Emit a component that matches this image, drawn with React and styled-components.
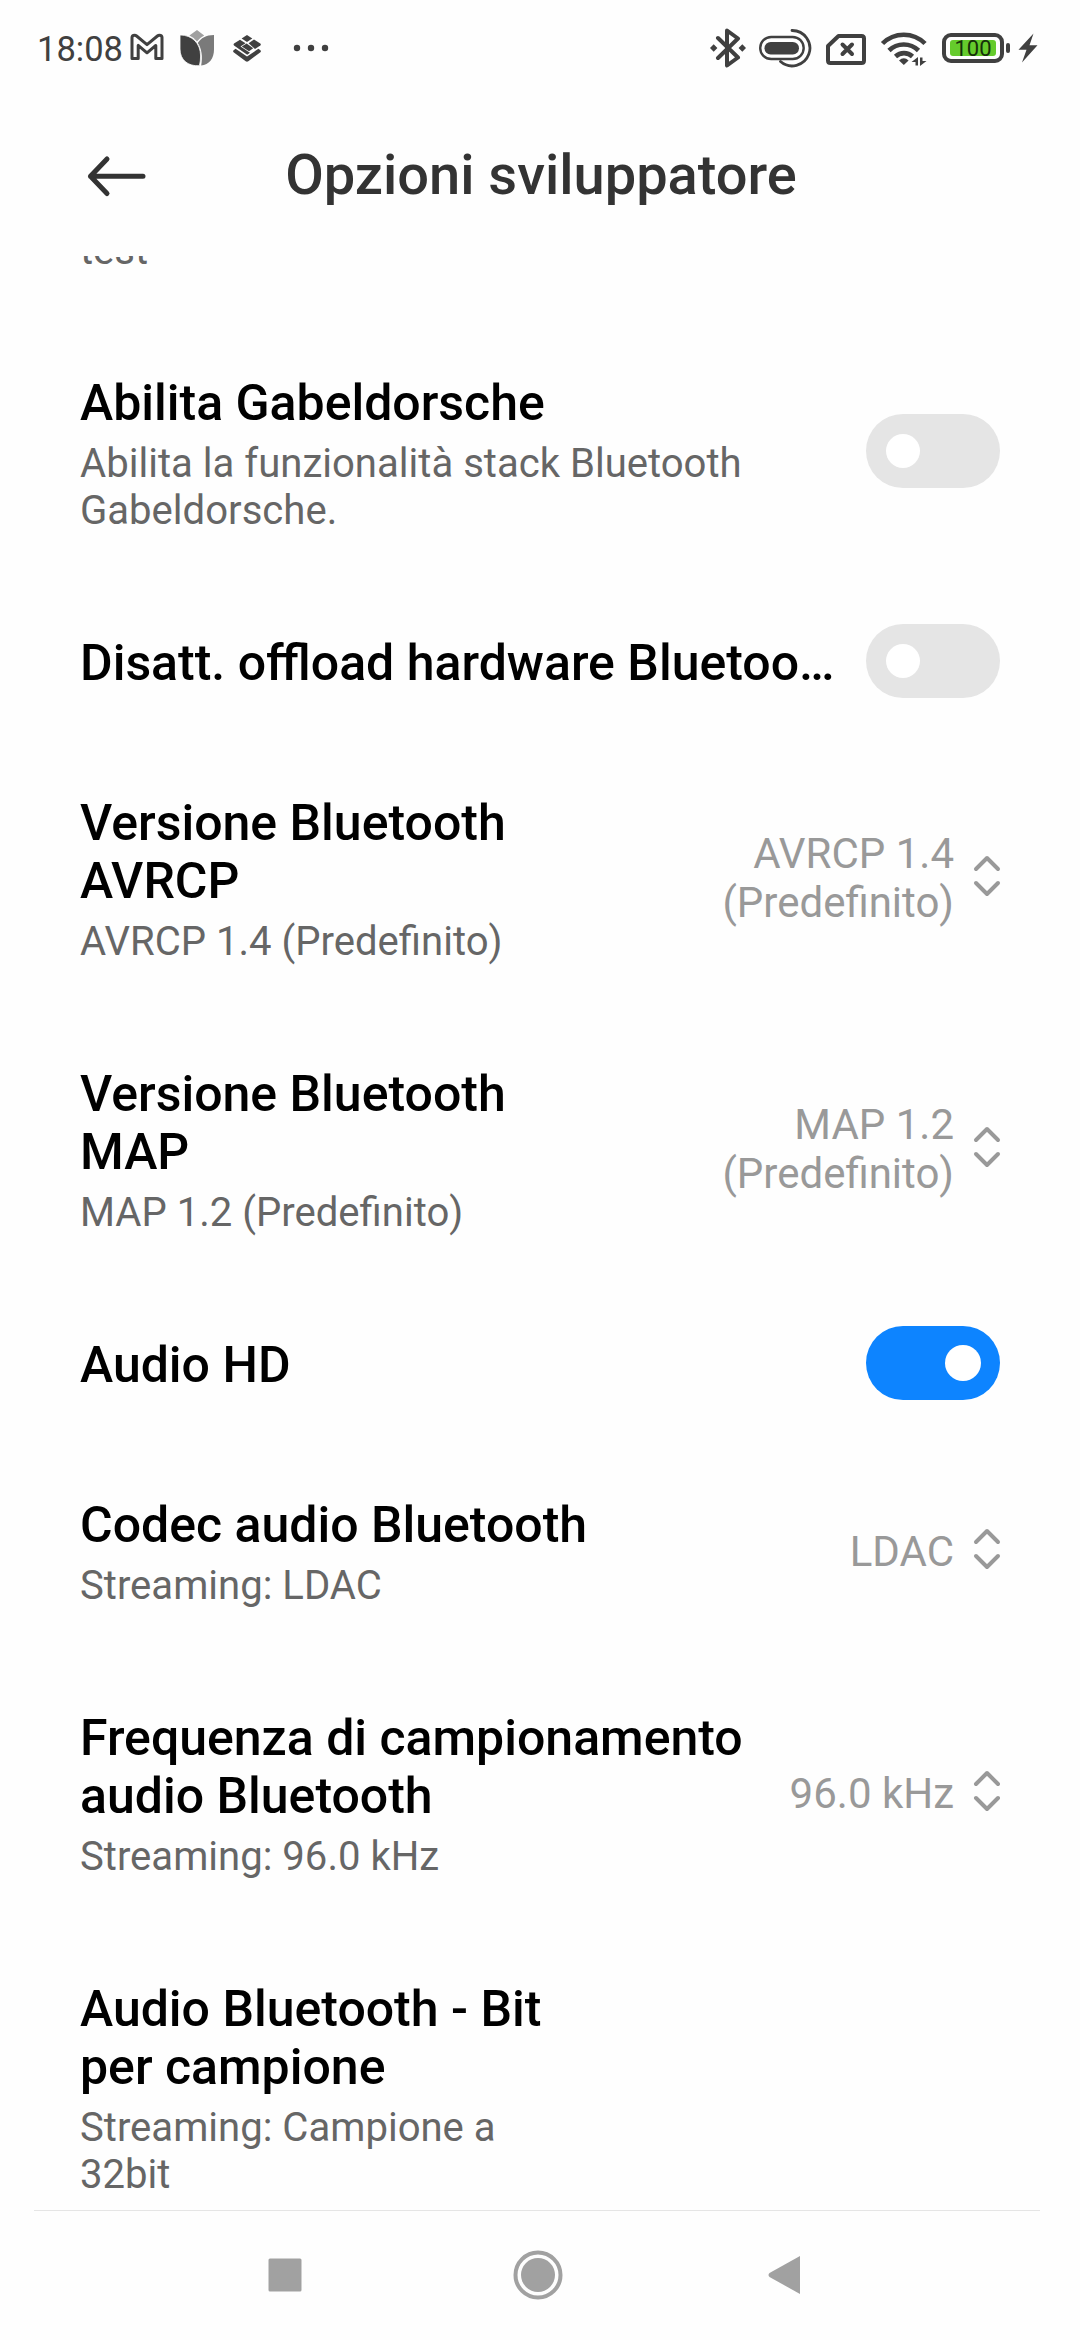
import { useState } from 'react';
import styled, { createGlobalStyle } from 'styled-components';

const initialSettings = [
  {
    id: 'gabeldorsche',
    title: 'Abilita Gabeldorsche',
    summary: 'Abilita la funzionalità stack Bluetooth Gabeldorsche.',
    checked: false,
  },
  {
    id: 'offload',
    title: 'Disatt. offload hardware Bluetooth A2DP',
    checked: false,
  },
  {
    id: 'avrcp',
    title: 'Versione Bluetooth AVRCP',
    summary: 'AVRCP 1.4 (Predefinito)',
    value: 'AVRCP 1.4 (Predefinito)',
    textWidth: 470,
  },
  {
    id: 'map',
    title: 'Versione Bluetooth MAP',
    summary: 'MAP 1.2 (Predefinito)',
    value: 'MAP 1.2 (Predefinito)',
    textWidth: 470,
  },
  { id: 'hd', title: 'Audio HD', checked: true },
  {
    id: 'codec',
    title: 'Codec audio Bluetooth',
    summary: 'Streaming: LDAC',
    value: 'LDAC',
  },
  {
    id: 'rate',
    title: 'Frequenza di campionamento audio Bluetooth',
    summary: 'Streaming: 96.0 kHz',
    value: '96.0 kHz',
    textWidth: 690,
  },
  {
    id: 'bits',
    title: 'Audio Bluetooth - Bit per campione',
    summary: 'Streaming: Campione a 32bit',
    textWidth: 470,
  },
];

const StatusIcons = () => (
  <>
    <StatusIcon width="36" height="40" viewBox="129 28 36 40">
      <path
        d="M132 58.6V37.6q0-2.4 2.6-2.4 1 0 2 .8L147 44.6l10.4-8.6q1-.8 2-.8 2.6 0 2.6 2.4v21h-6.2V45.4L147 52.8l-8.8-7.4v13.2z"
        fill="none"
        stroke="currentColor"
        strokeWidth="3"
        strokeLinejoin="round"
      />
    </StatusIcon>
    <StatusIcon width="36" height="40" viewBox="179 28 36 40" $left={14}>
      <path d="M197 30l7.2 5.4q-5 2.6-7.2 6-3-4-7.6-6z" fill="#a0a0a0" />
      <path
        d="M214 35v14.5c0 9-5 15.5-12.8 16 1.6-9 .6-16.5-3.4-22.5 3.2-5 8.2-8 16.2-8z"
        fill="#7a7a7a"
      />
      <path
        d="M180 35c12 0 20.6 8 20.6 21 0 3.6-.4 6.6-1.200 9.700C188 66.500 180 60 180 49z"
        stroke="#fefefe"
        strokeWidth=".8"
      />
    </StatusIcon>
    <StatusIcon width="30" height="40" viewBox="232 28 30 40" $left={17}>
      <path d="M247 35l5.300 3.500-5.300 3.600-5.400-3.600z" />
      <path d="M240 39.700l5.500 3.600-5 3.300L250 52.800l-2.800 2L234 45.600q-1-1.100 0-2z" />
      <path d="M248.600 43.200l5.400-3.600 6.300 4q1 .9 0 2l-5.300 3.400z" />
      <path d="M241.800 46.500l4.800-3 6.600 4.700-4.200 3z" />
      <path d="M235.600 48.800L247 56.400l11.400-7.600 2 1.400q1 1 0 2L248.300 61.300q-1.300.9-2.600 0L233.600 52.200q-1-1 0-2z" />
    </StatusIcon>
    <StatusIcon width="36" height="40" viewBox="293 28 36 40" $left={31}>
      <circle cx="297" cy="48" r="3.200" />
      <circle cx="311" cy="48" r="3.200" />
      <circle cx="325" cy="48" r="3.200" />
    </StatusIcon>
  </>
);

const SystemIcons = () => (
  <>
    <StatusIcon width="38" height="40" viewBox="709 28 38 40">
      <path
        d="M718 38l20 19.500-11 8V30.500l11 8L718 58"
        fill="none"
        stroke="currentColor"
        strokeWidth="4"
        strokeLinecap="round"
        strokeLinejoin="round"
      />
      <path d="M710 48l3.700-3.700 3.700 3.700-3.700 3.700zM738.600 48l3.700-3.700L746 48l-3.700 3.700z" />
    </StatusIcon>
    <StatusIcon width="54" height="40" viewBox="759 28 54 40" $left={12}>
      <rect x="764.500" y="42" width="34.500" height="12.500" rx="6.200" />
      <rect
        x="760.200"
        y="37"
        width="43.500"
        height="22"
        rx="11"
        fill="none"
        stroke="currentColor"
        strokeWidth="2.400"
      />
      <path
        d="M792 30.500A17.700 17.700 0 1 1 780.500 61.500"
        fill="none"
        stroke="currentColor"
        strokeWidth="2.800"
        strokeLinecap="round"
      />
    </StatusIcon>
    <StatusIcon width="42" height="40" viewBox="825 28 42 40" $left={12}>
      <path
        d="M838.500 36H861.500q2.500 0 2.500 2.500V60.500q0 2.500-2.500 2.500H830.500q-2.500 0-2.500-2.500V46z"
        fill="none"
        stroke="currentColor"
        strokeWidth="4"
        strokeLinejoin="round"
      />
      <path
        d="M842.500 44.500l9.500 9.500M852 44.500L842.500 54"
        stroke="currentColor"
        strokeWidth="4"
        strokeLinecap="round"
      />
    </StatusIcon>
    <StatusIcon width="48" height="40" viewBox="880 28 48 40" $left={13}>
      <g fill="none" stroke="currentColor" strokeWidth="4.600">
        <path d="M882.500 43.500a30 30 0 0 1 42.500 0" />
        <path d="M889 50.500a21 21 0 0 1 29.500 0" />
        <path d="M895.500 56.500a12.500 12.500 0 0 1 17 0" />
      </g>
      <path d="M899 60.500q4.800-4.500 9.600 0l-4.800 4.500z" />
      <path d="M918 57v8.500h-2.500v-3.500h-4zM920 66v-8.500h2.500v3.500h4z" />
    </StatusIcon>
    <Battery>
      <BatteryLevel>100</BatteryLevel>
    </Battery>
    <BatteryCap />
    <StatusIcon width="22" height="40" viewBox="1017 28 22 40" $left={7}>
      <path d="M1033.500 33.500L1018.500 49.800h8l-4.500 12.700 15.500-17.300h-8z" />
    </StatusIcon>
  </>
);

const Chevrons = () => (
  <ChevronIcon width="28" height="42" viewBox="0 0 28 42">
    <path d="M3 14L14 3l11 11M3 28l11 11 11-11" />
  </ChevronIcon>
);

const Setting = ({ setting, onToggle }) => {
  const { title, summary, value, checked, textWidth } = setting;
  const hasToggle = checked !== undefined;

  return (
    <Row>
      <Texts $width={textWidth}>
        <Title $single={!summary}>{title}</Title>
        {summary && <Summary>{summary}</Summary>}
      </Texts>
      {hasToggle && (
        <Toggle
          type="button"
          role="switch"
          aria-checked={checked}
          $on={checked}
          onClick={onToggle}
        >
          <Knob $on={checked} />
        </Toggle>
      )}
      {value && (
        <Picker>
          <Value>{value}</Value>
          <Chevrons />
        </Picker>
      )}
    </Row>
  );
};

const App = () => {
  const [settings, setSettings] = useState(initialSettings);

  const toggle = (id) => {
    setSettings(
      settings.map((item) =>
        item.id === id ? { ...item, checked: !item.checked } : item
      )
    );
  };

  return (
    <>
      <GlobalStyle />
      <Screen>
        <StatusBar>
          <Clock>18:08</Clock>
          <StatusIcons />
          <Spacer />
          <SystemIcons />
        </StatusBar>

        <Header>
          <BackButton type="button" aria-label="Indietro">
            <svg width="62" height="44" viewBox="0 0 62 44">
              <path d="M57 22.300H4.500M21 5L4.500 22.300 21 39.500" />
            </svg>
          </BackButton>
          <Heading>Opzioni sviluppatore</Heading>
        </Header>

        <List>
          <ScrolledRow>
            <Summary>test</Summary>
          </ScrolledRow>
          {settings.map((setting) => (
            <Setting
              key={setting.id}
              setting={setting}
              onToggle={() => toggle(setting.id)}
            />
          ))}
        </List>

        <NavBar>
          <svg width="34" height="34" viewBox="0 0 34 34">
            <rect x=".5" y=".5" width="33" height="33" rx="1.500" />
          </svg>
          <HomeIcon width="50" height="50" viewBox="0 0 50 50">
            <circle
              cx="25"
              cy="25"
              r="22.500"
              fill="none"
              stroke="currentColor"
              strokeWidth="4"
            />
            <circle cx="25" cy="25" r="17" />
          </HomeIcon>
          <svg width="34" height="40" viewBox="0 0 34 40">
            <path d="M32 1v38L1.500 22q-2-2 0-4z" />
          </svg>
        </NavBar>
      </Screen>
    </>
  );
};

const GlobalStyle = createGlobalStyle`
  * {
    box-sizing: border-box;
  }

  body {
    background: #fefefe;
    font-family: Roboto, sans-serif;
    margin: 0;
  }

  button {
    border: none;
    padding: 0;
  }

  svg {
    display: block;
    flex: none;
  }
`;

const Screen = styled.div`
  background: #fefefe;
  display: flex;
  flex-direction: column;
  height: 2340px;
  overflow: hidden;
  width: 1080px;
`;

const StatusBar = styled.div`
  align-items: center;
  color: #404040;
  display: flex;
  flex: none;
  height: 96px;
  padding: 0 41px 0 37px;
`;

const Clock = styled.span`
  font-size: 34.5px;
  line-height: 40px;
  padding-top: 2px;
  width: 92px;
`;

const Spacer = styled.div`
  flex: 1;
`;

const StatusIcon = styled.svg`
  fill: currentColor;
  margin-left: ${({ $left }) => $left || 0}px;
`;

const Battery = styled.div`
  border: 4px solid #404040;
  border-radius: 9px;
  height: 30px;
  margin-left: 14px;
  padding: 3px 4px;
  width: 62px;
`;

const BatteryLevel = styled.div`
  background: #65cb2c;
  border-radius: 3px;
  color: #16300a;
  display: flex;
  font-size: 22px;
  height: 16px;
  justify-content: center;
  line-height: 18px;
`;

const BatteryCap = styled.div`
  background: #404040;
  border-radius: 2px;
  height: 10px;
  margin-left: 2px;
  width: 4px;
`;

const Header = styled.header`
  align-items: center;
  display: grid;
  flex: none;
  grid-template-columns: 140px 1fr 140px;
  height: 160px;
  padding: 0 84px 0 86px;
`;

const BackButton = styled.button`
  background: none;

  path {
    fill: none;
    stroke: #333;
    stroke-linecap: round;
    stroke-linejoin: round;
    stroke-width: 5;
  }
`;

const Heading = styled.h1`
  color: #333;
  font-size: 56px;
  font-weight: 500;
  line-height: 66px;
  margin: 0;
  padding-bottom: 3px;
  text-align: center;
  white-space: nowrap;
`;

const List = styled.main`
  flex: 1;
  overflow: hidden;
`;

const Row = styled.div`
  align-items: center;
  display: flex;
  justify-content: space-between;
  min-height: 160px;
  padding: 50px 80px;
`;

const ScrolledRow = styled(Row)`
  margin-top: -79px;
  min-height: 0;
`;

const Texts = styled.div`
  flex: 0 1 auto;
  max-width: ${({ $width }) => ($width ? `${$width}px` : '757px')};
  min-width: 0;
`;

const Title = styled.h2`
  color: #000;
  font-size: 50px;
  font-weight: 500;
  line-height: 58px;
  margin: 0;
  overflow: ${({ $single }) => ($single ? 'hidden' : 'visible')};
  padding-bottom: ${({ $single }) => ($single ? 2 : 0)}px;
  text-overflow: ellipsis;
  white-space: ${({ $single }) => ($single ? 'nowrap' : 'normal')};
`;

const Summary = styled.p`
  color: #666;
  font-size: 40.1px;
  line-height: 47px;
  margin: 0;

  ${Title} + & {
    margin-top: 8px;
  }
`;

const Toggle = styled.button`
  align-items: center;
  background: ${({ $on }) => ($on ? '#0d84ff' : '#e5e5e5')};
  border-radius: 37px;
  display: flex;
  flex: none;
  height: 74px;
  justify-content: ${({ $on }) => ($on ? 'flex-end' : 'flex-start')};
  margin: -11px 0 -5px;
  padding: 0 ${({ $on }) => ($on ? 19 : 20)}px;
  width: 134px;
`;

const Knob = styled.span`
  background: #fff;
  border-radius: 50%;
  height: ${({ $on }) => ($on ? 36 : 34)}px;
  width: ${({ $on }) => ($on ? 36 : 34)}px;
`;

const Picker = styled.div`
  align-items: center;
  display: flex;
  flex: none;
  gap: 19px;
  margin-right: -1px;
`;

const Value = styled.span`
  color: #999;
  font-size: 42px;
  line-height: 49px;
  max-width: 240px;
  padding-bottom: 3px;
  text-align: right;
`;

const ChevronIcon = styled.svg`
  fill: none;
  margin-bottom: 7px;
  stroke: #999;
  stroke-linecap: round;
  stroke-linejoin: round;
  stroke-width: 4;
`;

const NavBar = styled.nav`
  align-items: center;
  border-top: 1px solid #e5e5e5;
  color: #a1a1a1;
  display: flex;
  flex: none;
  height: 130px;
  justify-content: space-between;
  margin: 0 40px 0 34px;
  padding: 0 238px 1px 234px;

  svg {
    fill: currentColor;
  }
`;

const HomeIcon = styled.svg`
  margin: 0 -3px 0 3px;
`;

export default App;
